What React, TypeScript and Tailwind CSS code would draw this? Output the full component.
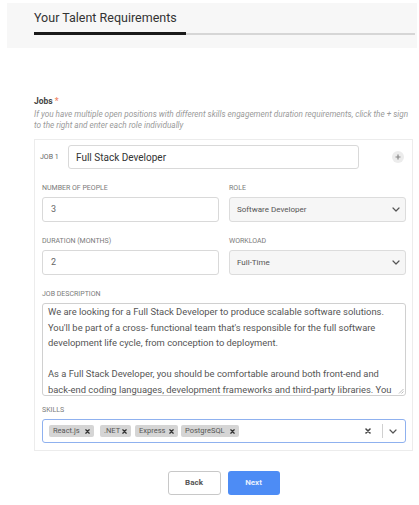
import React from "react";

const Chevron = () => (
  <svg width="8" height="5" viewBox="0 0 8 5" fill="none">
    <path d="M1 1l3 3 3-3" stroke="#555" strokeWidth="1.2" strokeLinecap="round" strokeLinejoin="round" />
  </svg>
);

const SmallX = ({ size = 5, color = "#333" }: { size?: number; color?: string }) => (
  <svg width={size} height={size} viewBox="0 0 6 6" fill="none">
    <path d="M1 1l4 4M5 1L1 5" stroke={color} strokeWidth="1.6" strokeLinecap="round" />
  </svg>
);

const Label = ({ children }: { children: React.ReactNode }) => (
  <div className="text-[7px] leading-[10px] uppercase text-[#7a7a7a] mb-[4px]">{children}</div>
);

const TextInput = ({ value }: { value: string }) => (
  <div className="h-[25px] border border-[#d9d9d9] rounded-[3px] bg-white flex items-center pl-[8px] text-[9px] text-[#666]">
    {value}
  </div>
);

const Select = ({ value }: { value: string }) => (
  <div className="h-[25px] border border-[#dcdcdc] rounded-[3px] bg-[#f6f6f6] flex items-center justify-between pl-[7px] pr-[5px] text-[8px] text-[#555]">
    <span>{value}</span>
    <Chevron />
  </div>
);

const Chip = ({ name, w, ml }: { name: string; w: string; ml: string }) => (
  <div className={`${w} ${ml} h-[12px] bg-[#d5d5d5] rounded-[2px] flex items-center justify-between pl-[4px] pr-[4px] text-[7.5px] text-[#555]`}>
    <span>{name}</span>
    <SmallX size={5} />
  </div>
);

export default function App() {
  return (
    <div className="w-[419px] h-[505px] bg-white overflow-hidden" style={{ fontFamily: "Roboto, 'Liberation Sans', sans-serif" }}>
      {/* header */}
      <div className="ml-[7px] mt-[3px] w-[410px] h-[45px] bg-[#f7f7f7] pl-[27px] pr-[2px] pt-[7px]">
        <div className="text-[12.5px] leading-[15px] text-[#333]">Your Talent Requirements</div>
        <div className="mt-[7px] flex items-center h-[3px]">
          <div className="w-[152px] h-[3px] bg-[#1a1a1a]" />
          <div className="flex-1 h-[2px] bg-[#d6d6d6]" />
        </div>
      </div>

      <div className="ml-[34px] w-[379px]">
        <div className="mt-[48px] text-[8.5px] leading-[10px] font-bold text-[#444]">
          Jobs <span className="text-[#f08a6b]">*</span>
        </div>
        <div className="mt-[3px] text-[8.2px] leading-[11px] italic text-[#9a9a9a] whitespace-nowrap">
          If you have multiple open positions with different skills engagement duration requirements, click the + sign
          <br />
          to the right and enter each role individually
        </div>

        {/* card */}
        <div className="mt-[8px] border border-[#ececec] pt-[5px] pl-[7px] pr-[6px] pb-[7px]">
          <div className="flex items-center h-[24px]">
            <div className="-ml-[2px] w-[28px] text-[7px] text-[#666]">JOB 1</div>
            <div className="w-[291px] h-[24px] border border-[#d9d9d9] rounded-[3px] bg-white flex items-center pl-[7px] text-[10px] text-[#333]">
              Full Stack Developer
            </div>
            <div className="ml-[33px] w-[12px] h-[12px] rounded-full bg-[#ececec] flex items-center justify-center">
              <svg width="6" height="6" viewBox="0 0 6 6">
                <path d="M3 0.5v5M0.5 3h5" stroke="#888" strokeWidth="1.2" />
              </svg>
            </div>
          </div>

          <div className="grid grid-cols-2 gap-x-[10px] mt-[14px]">
            <div>
              <Label>Number of People</Label>
              <TextInput value="3" />
            </div>
            <div>
              <Label>Role</Label>
              <Select value="Software Developer" />
            </div>
          </div>

          <div className="grid grid-cols-2 gap-x-[10px] mt-[14px]">
            <div>
              <Label>Duration (Months)</Label>
              <TextInput value="2" />
            </div>
            <div>
              <Label>Workload</Label>
              <Select value="Full-Time" />
            </div>
          </div>

          <div className="mt-[14px]">
            <Label>Job Description</Label>
            <div className="relative h-[93px] border border-[#d0d0d0] rounded-[3px] bg-white overflow-hidden pl-[5px] text-[9.4px] leading-[15.5px] text-[#555] whitespace-nowrap">
              <div>We are looking for a Full Stack Developer to produce scalable software solutions.</div>
              <div>You'll be part of a cross- functional team that's responsible for the full software</div>
              <div>development life cycle, from conception to deployment.</div>
              <div>&nbsp;</div>
              <div>As a Full Stack Developer, you should be comfortable around both front-end and</div>
              <div>back-end coding languages, development frameworks and third-party libraries. You</div>
              <svg className="absolute right-[1px] bottom-[1px]" width="6" height="6" viewBox="0 0 6 6">
                <path d="M5.5 1L1 5.5M5.5 3.5L3.5 5.5" stroke="#aaa" strokeWidth="0.8" />
              </svg>
            </div>
          </div>

          <div className="mt-[9px]">
            <Label>Skills</Label>
            <div className="h-[24px] border border-[#8fb1ef] rounded-[3px] bg-white flex items-center pl-[6px]">
              <Chip name="React.js" w="w-[45px]" ml="ml-0" />
              <Chip name=".NET" w="w-[31px]" ml="ml-[6px]" />
              <Chip name="Express" w="w-[43px]" ml="ml-[4px]" />
              <Chip name="PostgreSQL" w="w-[58px]" ml="ml-[3px]" />
              <div className="ml-auto">
                <SmallX size={6} color="#444" />
              </div>
              <div className="ml-[11px] w-px h-[14px] bg-[#d0d0d0]" />
              <div className="ml-[6px] mr-[8px] flex items-center">
                <Chevron />
              </div>
            </div>
          </div>
        </div>

        <div className="mt-[20px] flex justify-center gap-[7px]">
          <button className="w-[53px] h-[24px] border border-[#c8c8c8] rounded-[3px] bg-white text-[8px] font-bold text-[#555]">
            Back
          </button>
          <button className="w-[52px] h-[24px] rounded-[3px] bg-[#4d8cf5] text-[8px] font-bold text-[#e6efff]">
            Next
          </button>
        </div>
      </div>
    </div>
  );
}
